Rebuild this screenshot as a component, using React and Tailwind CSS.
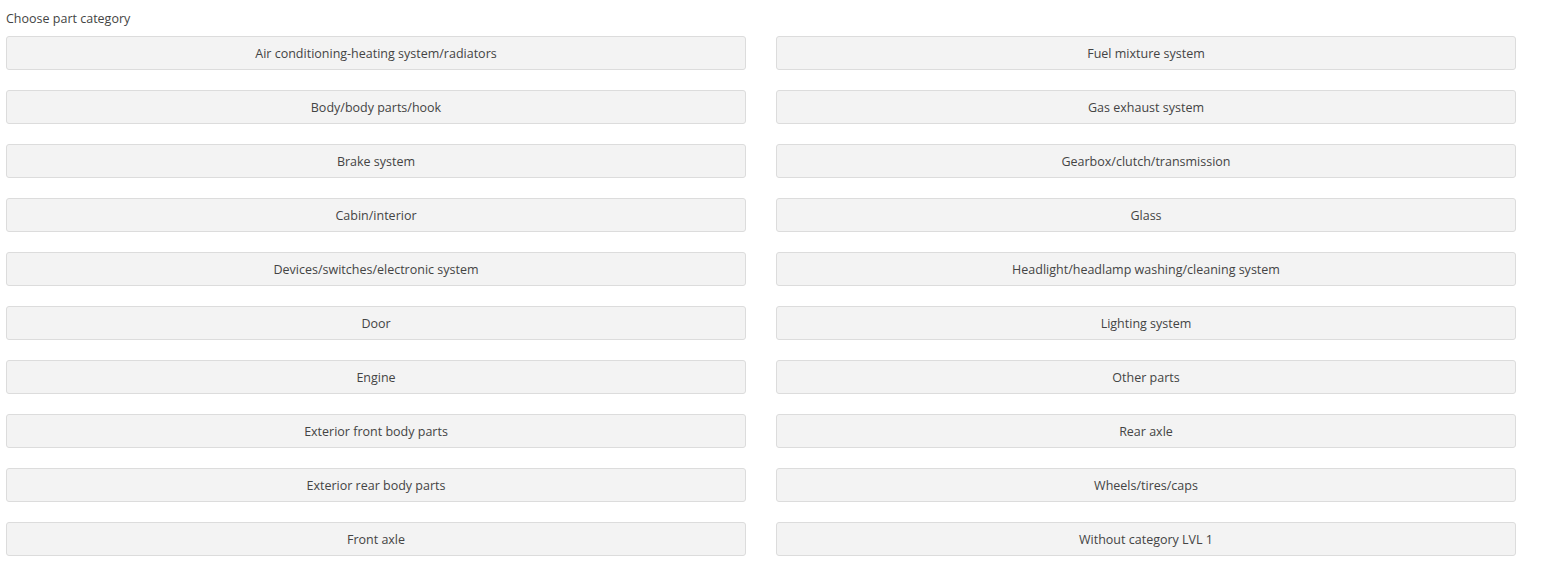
export default function App() {
  const left = [
    "Air conditioning-heating system/radiators",
    "Body/body parts/hook",
    "Brake system",
    "Cabin/interior",
    "Devices/switches/electronic system",
    "Door",
    "Engine",
    "Exterior front body parts",
    "Exterior rear body parts",
    "Front axle",
  ];
  const right = [
    "Fuel mixture system",
    "Gas exhaust system",
    "Gearbox/clutch/transmission",
    "Glass",
    "Headlight/headlamp washing/cleaning system",
    "Lighting system",
    "Other parts",
    "Rear axle",
    "Wheels/tires/caps",
    "Without category LVL 1",
  ];
  const items = [];
  for (let i = 0; i < left.length; i++) {
    items.push(left[i], right[i]);
  }
  return (
    <div
      className="bg-white min-h-[581px] pl-[6px] pt-[10px] text-[#333]"
      style={{ fontFamily: '"Open Sans", "Liberation Sans", sans-serif' }}
    >
      <div className="text-[12.5px] leading-[18px] text-[#444]">Choose part category</div>
      <div className="grid grid-cols-[740px_740px] gap-x-[30px] gap-y-[20px] mt-[8px]">
        {items.map((t) => (
          <button
            key={t}
            className="h-[34px] pt-[2px] border border-[#dcdcdc] bg-[#f3f3f3] rounded-[3px] text-[12.5px] text-[#444] flex items-center justify-center"
          >
            {t}
          </button>
        ))}
      </div>
    </div>
  );
}
